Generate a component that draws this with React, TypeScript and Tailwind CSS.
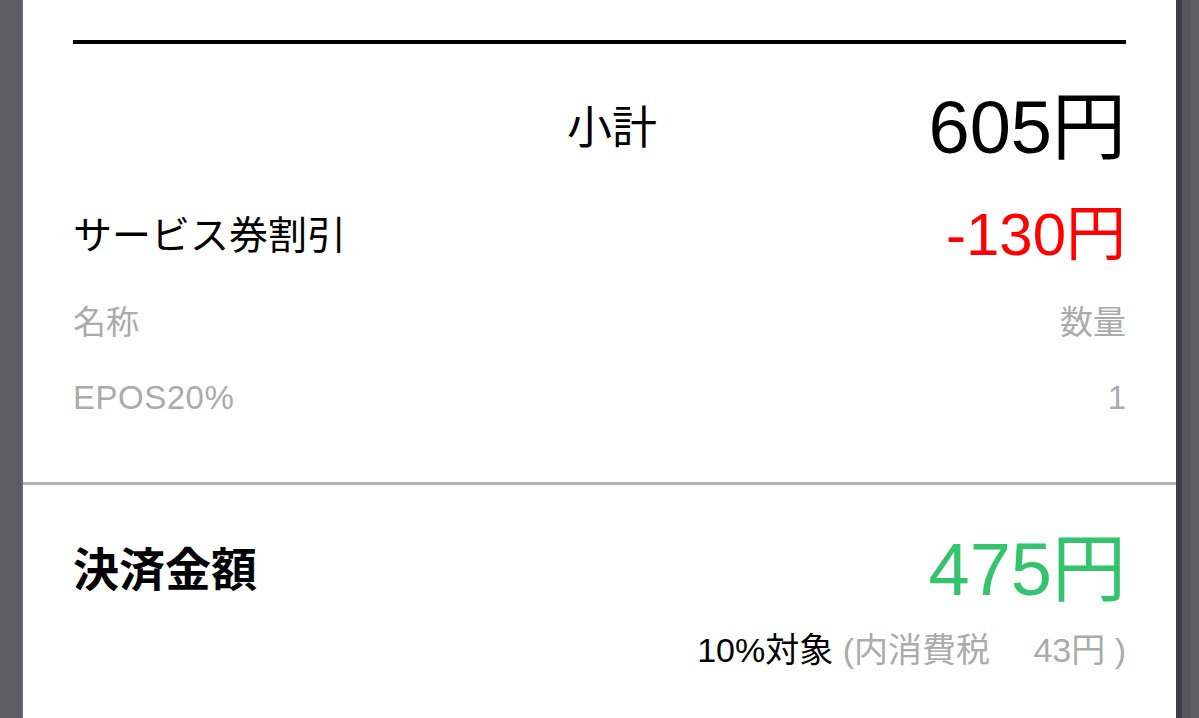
const FONT = "font-['Liberation_Sans','Noto_Sans_CJK_JP',sans-serif]";

export default function App() {
  return (
    <div className={`flex h-[718px] w-[1199px] overflow-hidden bg-[#5c5c61] ${FONT}`}>
      <div className="w-[23px] shrink-0 border-r border-[#6e6e72] bg-[#5c5c61]" />

      <main className="flex w-[1153px] shrink-0 flex-col bg-white">
        <div className="px-[50px] pt-[40px]">
          <div className="h-[4px] bg-black" />

          <div className="mt-[48px] flex h-[72px] items-center">
            <span className="flex-1 pl-[494px] text-[45px] leading-none text-black">小計</span>
            <span className="text-[74px] leading-none text-black">605円</span>
          </div>

          <div className="mt-[35px] flex h-[72px] items-center justify-between">
            <span className="text-[39px] leading-none text-black">サービス券割引</span>
            <span className="text-[60px] leading-none text-[#ff0000]">-130円</span>
          </div>

          <div className="mt-[31px] flex h-[40px] items-center justify-between text-[33px] leading-none text-[#ababab]">
            <span>名称</span>
            <span>数量</span>
          </div>

          <div className="mt-[35px] flex h-[40px] items-center justify-between text-[33px] leading-none text-[#ababab]">
            <span className="tracking-[0.5px]">EPOS20%</span>
            <span>1</span>
          </div>
        </div>

        <div className="mt-[65px] h-[3px] bg-[#b3b3b3]" />

        <div className="px-[50px]">
          <div className="mt-[49px] flex h-[72px] items-center justify-between">
            <span className="text-[46px] font-bold leading-none text-black">決済金額</span>
            <span className="text-[74px] leading-none text-[#34c46d]">475円</span>
          </div>

          <div className="mt-[24px] flex h-[40px] items-center justify-end text-[34px] leading-none">
            <span className="text-black">10%対象</span>
            <span className="whitespace-pre text-[#ababab]"> (内消費税　 43円 )</span>
          </div>
        </div>
      </main>

      <div className="flex w-[23px] shrink-0">
        <div className="w-[6px] bg-[#3e3e42]" />
        <div className="w-[9px] bg-[#55565a]" />
        <div className="flex-1 bg-[#5c5c61]" />
      </div>
    </div>
  );
}
